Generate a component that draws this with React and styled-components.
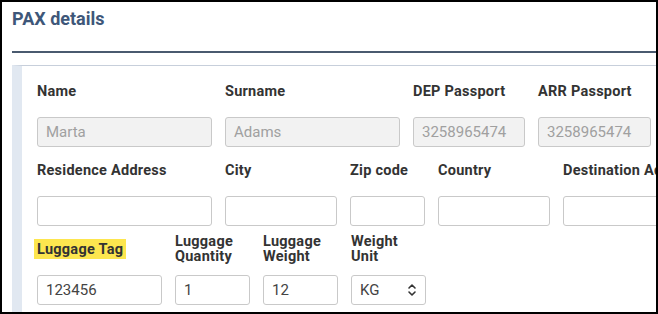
import React from 'react'
import styled, { createGlobalStyle } from 'styled-components'

const GlobalStyle = createGlobalStyle`
  html, body {
    margin: 0;
    padding: 0;
    background: #fff;
  }
  * {
    box-sizing: border-box;
  }
`

const Frame = styled.div`
  width: 658px;
  height: 314px;
  border: 2px solid #000;
  overflow: hidden;
  background: #fff;
  font-family: Roboto, "Liberation Sans", sans-serif;
`

const Header = styled.div`
  margin-left: 10px;
  padding-top: 5px;
`

const Title = styled.h2`
  margin: 0;
  font-size: 18px;
  line-height: 24px;
  font-weight: 700;
  color: #3e5779;
`

const Rule = styled.div`
  margin-top: 20px;
  height: 2px;
  background: #4a5a6f;
`

const Panel = styled.div`
  margin: 12px 0 0 10px;
  border-top: 1px solid #c7cfdb;
  border-left: 10px solid #e1e8f1;
  padding: 10px 0 20px 15px;
  display: flex;
  flex-direction: column;
  gap: 8px;
  min-height: 300px;
`

const Row = styled.div`
  display: flex;
  flex-wrap: nowrap;
  gap: 13px;
`

const Field = styled.div`
  flex: 0 0 ${p => p.$w}px;
  display: flex;
  flex-direction: column;
  gap: 11px;
`

const LabelBox = styled.div`
  height: 30px;
  display: flex;
  align-items: center;
  white-space: nowrap;
`

const Label = styled.span`
  font-size: 14.5px;
  line-height: 15px;
  letter-spacing: 0.25px;
  font-weight: 700;
  color: #333;
  padding: ${p => (p.$mark ? '2.5px 3px' : '0')};
  margin-left: ${p => (p.$mark ? '-3px' : '0')};
  background: ${p => (p.$mark ? '#fde64f' : 'transparent')};
`

const Input = styled.div`
  height: 30px;
  border: 1px solid #c9c9c9;
  border-radius: 3px;
  background: ${p => (p.$disabled ? '#f2f2f2' : '#fff')};
  color: ${p => (p.$disabled ? '#a0a0a0' : '#444')};
  font-size: 15px;
  padding: 0 8px;
  display: flex;
  align-items: center;
  justify-content: space-between;
`

const Chevrons = () => (
  <svg width="10" height="14" viewBox="0 0 10 14" fill="none" stroke="#333" strokeWidth="1.6" strokeLinecap="round" strokeLinejoin="round">
    <path d="M2 5 L5 2 L8 5" />
    <path d="M2 9 L5 12 L8 9" />
  </svg>
)

const rows = [
  [
    { label: 'Name', w: 175, value: 'Marta', disabled: true },
    { label: 'Surname', w: 175, value: 'Adams', disabled: true },
    { label: 'DEP Passport', w: 112, value: '3258965474', disabled: true },
    { label: 'ARR Passport', w: 113, value: '3258965474', disabled: true },
  ],
  [
    { label: 'Residence Address', w: 175 },
    { label: 'City', w: 112 },
    { label: 'Zip code', w: 75 },
    { label: 'Country', w: 112 },
    { label: 'Destination Address', w: 175 },
  ],
  [
    { label: 'Luggage Tag', w: 125, value: '123456', mark: true },
    { label: ['Luggage', 'Quantity'], w: 75, value: '1' },
    { label: ['Luggage', 'Weight'], w: 75, value: '12' },
    { label: ['Weight', 'Unit'], w: 75, value: 'KG', select: true },
  ],
]

export default function App() {
  return (
    <>
      <GlobalStyle />
      <Frame>
        <Header>
          <Title>PAX details</Title>
          <Rule />
        </Header>
        <Panel>
          {rows.map((row, i) => (
            <Row key={i}>
              {row.map((f, j) => (
                <Field key={j} $w={f.w}>
                  <LabelBox>
                    <Label $mark={f.mark}>
                      {Array.isArray(f.label) ? (
                        <>
                          {f.label[0]}
                          <br />
                          {f.label[1]}
                        </>
                      ) : (
                        f.label
                      )}
                    </Label>
                  </LabelBox>
                  <Input $disabled={f.disabled}>
                    <span>{f.value}</span>
                    {f.select && <Chevrons />}
                  </Input>
                </Field>
              ))}
            </Row>
          ))}
        </Panel>
      </Frame>
    </>
  )
}
